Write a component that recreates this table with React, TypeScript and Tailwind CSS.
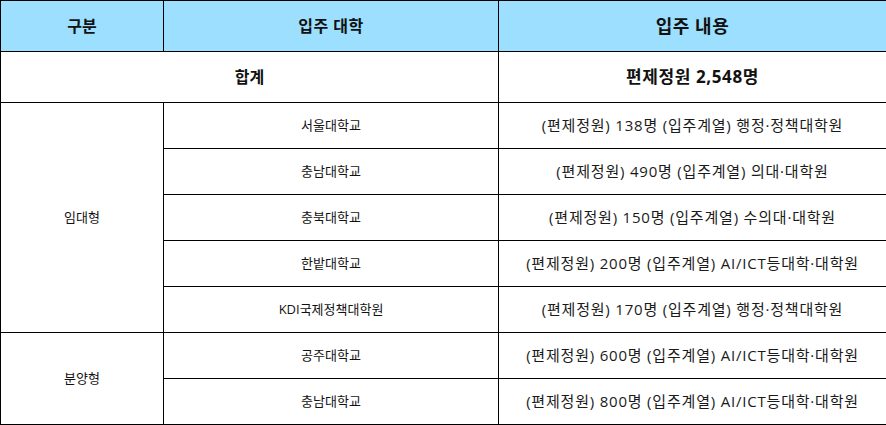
const rows = [
  { group: '임대형', span: 5, school: '서울대학교', quota: '138명', field: '행정·정책대학원' },
  { school: '충남대학교', quota: '490명', field: '의대·대학원' },
  { school: '충북대학교', quota: '150명', field: '수의대·대학원' },
  { school: '한밭대학교', quota: '200명', field: 'AI/ICT등대학·대학원' },
  { school: 'KDI국제정책대학원', quota: '170명', field: '행정·정책대학원' },
  { group: '분양형', span: 2, school: '공주대학교', quota: '600명', field: 'AI/ICT등대학·대학원' },
  { school: '충남대학교', quota: '800명', field: 'AI/ICT등대학·대학원' },
];

export default function App() {
  return (
    <div className="w-[886px] h-[425px] bg-white font-['Open_Sans','Noto_Sans_CJK_KR',sans-serif] text-[#111]">
      <table className="w-[886px] table-fixed border-collapse">
        <colgroup>
          <col className="w-[163px]" />
          <col className="w-[335px]" />
          <col className="w-[388px]" />
        </colgroup>
        <thead>
          <tr className="h-[51px] bg-[#9cdffe] text-[16px] font-bold">
            <th className="border border-black">구분</th>
            <th className="border border-black tracking-[0.5px]">입주 대학</th>
            <th className="border border-black text-[18px] tracking-[0.5px]">입주 내용</th>
          </tr>
        </thead>
        <tbody>
          <tr className="h-[51px] font-bold">
            <td colSpan={2} className="border border-black text-center text-[16px]">
              합계
            </td>
            <td className="border border-black text-center text-[17px] tracking-[0.6px]">
              편제정원 2,548명
            </td>
          </tr>
          {rows.map((r, i) => (
            <tr key={i} className="h-[46px] text-[13px]">
              {r.group && (
                <td rowSpan={r.span} className="border border-black text-center">
                  {r.group}
                </td>
              )}
              <td className="border border-black text-center">{r.school}</td>
              <td className="border border-black text-center text-[15px] tracking-[0.8px] text-[#1a1a1a]">
                (편제정원) {r.quota} (입주계열) {r.field}
              </td>
            </tr>
          ))}
        </tbody>
      </table>
    </div>
  );
}
